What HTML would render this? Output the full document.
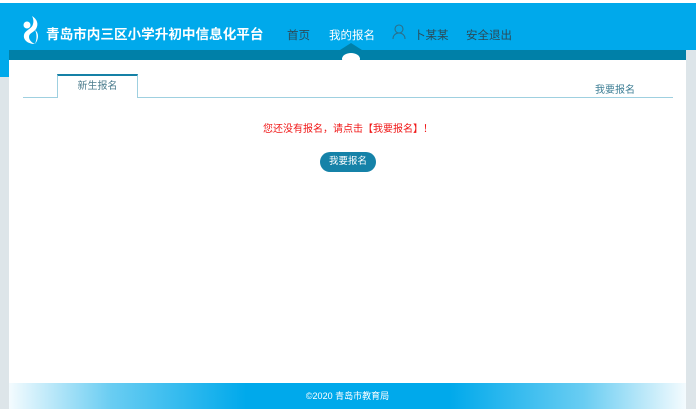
<!DOCTYPE html>
<html><head><meta charset="utf-8"><style>
*{margin:0;padding:0;box-sizing:border-box}
body{width:696px;height:409px;position:relative;overflow:hidden;background:#dde5e9;font-family:"Liberation Sans","Noto Sans CJK SC",sans-serif}
.top{position:absolute;left:0;top:3px;width:696px;height:47px;background:#00a9eb}
.white0{position:absolute;left:0;top:0;width:696px;height:3px;background:#fff}
.lstrip{position:absolute;left:0;top:50px;width:9px;height:27px;background:#00a9eb}
.band{position:absolute;left:9px;top:50px;width:677px;height:10px;background:#0080a8}
.main{position:absolute;left:9px;top:60px;width:677px;height:349px;background:#fff}
.title{position:absolute;left:46px;top:23px;color:#fff;font-size:13.6px;font-weight:bold;letter-spacing:0}
.nav{position:absolute;top:27px;font-size:11.5px;color:#2b4a58}
.tabline{position:absolute;left:23px;top:97px;width:650px;height:1px;background:#9fd0e0}
.tab{position:absolute;left:57px;top:74px;width:81px;height:24px;background:#fff;border:1px solid #9fd0e0;border-top:2px solid #1581a6;border-bottom:none;font-size:10px;color:#4d7d8e;text-align:center;line-height:22px}
.foot{position:absolute;left:9px;top:383px;width:677px;height:26px;background:linear-gradient(90deg,#f4fbfe 0%,#6acdf2 15%,#00a9eb 35%,#00a9eb 65%,#6acdf2 85%,#f4fbfe 100%);color:#fff;font-size:9px;text-align:center;line-height:26px}
</style></head><body>
<div class="white0"></div>
<div class="top"></div>
<div class="lstrip"></div>
<div class="band"></div>
<svg style="position:absolute;left:330px;top:42px" width="44" height="20"><polygon points="10,8 21,1 32,8" fill="#0080a8"/><ellipse cx="21" cy="17" rx="9" ry="6" fill="#fff"/></svg>
<div class="main"></div>
<svg style="position:absolute;left:20px;top:14px" width="22" height="32" viewBox="0 0 22 32">
<circle cx="7" cy="11" r="3.5" fill="#fff"/>
<path d="M12 2 C17 5 19 10 16 15 C13 19 9 19 9 23 C9 26 12 29 15 30 C8 30 3 26 4 21 C5 16 12 15 13 10 C14 7 13 4 12 2Z" fill="#fff"/>
<path d="M15 16 C19 19 19 25 15 30 C17 25 17 20 15 16Z" fill="#fff"/>
</svg>
<div class="title">青岛市内三区小学升初中信息化平台</div>
<div class="nav" style="left:287px">首页</div>
<div class="nav" style="left:329px;color:#fff">我的报名</div>
<svg style="position:absolute;left:392px;top:24px" width="14" height="16" viewBox="0 0 14 16" fill="none" stroke="#2b6f8a" stroke-width="1.1"><circle cx="7" cy="5" r="4"/><path d="M1 15 C1 11 4 9 7 9 C10 9 13 11 13 15"/></svg>
<div class="nav" style="left:414px">卜某某</div>
<div class="nav" style="left:466px">安全退出</div>
<div class="tabline"></div>
<div class="tab">新生报名</div>
<div style="position:absolute;left:595px;top:81px;font-size:10px;color:#3f7f96">我要报名</div>
<div style="position:absolute;left:0;width:696px;top:120px;text-align:center;font-size:10px;color:#f01818">您还没有报名，请点击【我要报名】！</div>
<div style="position:absolute;left:320px;top:152px;width:56px;height:20px;border-radius:10px;background:#1582a8;color:#fff;font-size:9.5px;text-align:center;line-height:20px">我要报名</div>
<div class="foot">©2020 青岛市教育局</div>
</body></html>
